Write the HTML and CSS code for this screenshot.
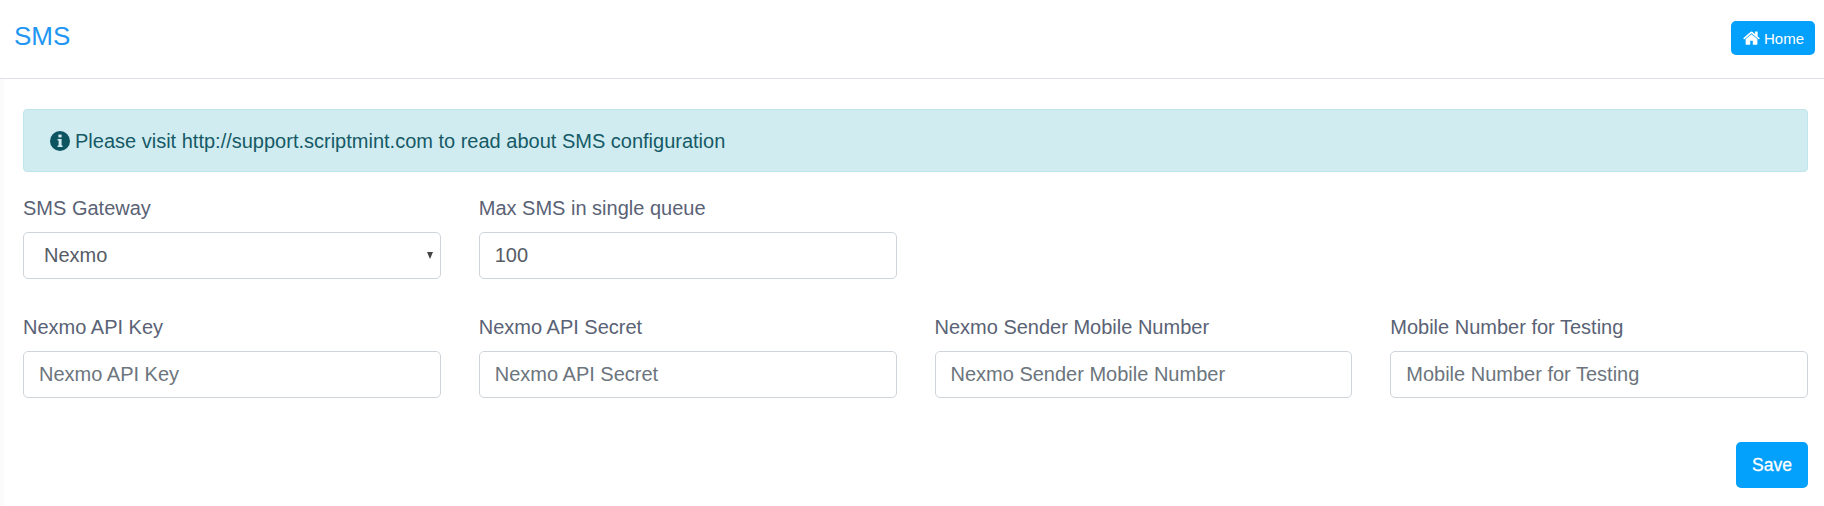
FILE: index.html
```html
<!DOCTYPE html>
<html lang="en">
<head>
    <meta charset="UTF-8">
    <title>SMS</title>
    <link rel="stylesheet" href="styles.css">
</head>
<body>

<div class="page">
    <header class="page-header">
        <h1>SMS</h1>
        <a class="btn btn-home" href="#">
            <svg class="icon-home" viewBox="0 0 1664 1408" aria-hidden="true"><path d="M1408 768v480q0 26-19 45t-45 19H960V928H704v384H320q-26 0-45-19t-19-45V768q0-1 .5-3t.5-3l575-474 575 474q1 2 1 6zm223-69l-62 74q-8 9-21 11h-3q-13 0-21-7L832 200 140 777q-12 8-24 7-13-2-21-11l-62-74q-8-10-7-23.500t11-21.500L756 37q32-26 76-26t76 26l272 227V47q0-14 9-23t23-9h192q14 0 23 9t9 23v454l219 182q10 8 11 21.500t-7 23.500z"/></svg>
            Home
        </a>
    </header>

    <form class="content">
        <!-- info message -->
        <div class="alert">
            <svg class="icon-info" viewBox="0 0 20 20" aria-hidden="true">
                <circle cx="10" cy="10" r="10"/>
                <rect class="cut" x="8.4" y="3.600" width="3.200" height="2.800"/>
                <path class="cut" d="M7.600 8h4v6.400h1V16H7.600v-1.600h1V9.600h-1z"/>
            </svg>
            Please visit http://support.scriptmint.com to read about SMS configuration
        </div>

        <div class="form-grid">
            <div class="field">
                <label for="gateway">SMS Gateway</label>
                <div class="select-wrap">
                    <select id="gateway" class="control">
                        <option>Nexmo</option>
                    </select>
                </div>
            </div>
            <div class="field">
                <label for="max-sms">Max SMS in single queue</label>
                <input id="max-sms" class="control" type="text" value="100">
            </div>
            <div class="field field-first">
                <label for="api-key">Nexmo API Key</label>
                <input id="api-key" class="control" type="text" placeholder="Nexmo API Key">
            </div>
            <div class="field">
                <label for="api-secret">Nexmo API Secret</label>
                <input id="api-secret" class="control" type="text" placeholder="Nexmo API Secret">
            </div>
            <div class="field">
                <label for="sender">Nexmo Sender Mobile Number</label>
                <input id="sender" class="control" type="text" placeholder="Nexmo Sender Mobile Number">
            </div>
            <div class="field">
                <label for="test-number">Mobile Number for Testing</label>
                <input id="test-number" class="control" type="text" placeholder="Mobile Number for Testing">
            </div>
        </div>

        <div class="form-actions">
            <button type="submit" class="btn btn-save">Save</button>
        </div>
    </form>
</div>

</body>
</html>
```

FILE: styles.css
```css
* {
    box-sizing: border-box;
}
body {
    margin: 0;
    background-color: #fbfbfc;
    font-family: 'Liberation Sans', Arial, sans-serif;
    color: #5a6275;
}
.page {
    margin-left: 4px;
    height: 506px;
    background-color: #fff;
}
.page-header {
    display: flex;
    justify-content: space-between;
    align-items: flex-start;
    height: 79px;
    margin-left: -4px;
    padding: 21px 9px 0 14px;
    background-color: #fff;
    border-bottom: 1px solid #dee2e6;
}
.page-header h1 {
    margin: 0;
    font-size: 26px;
    font-weight: normal;
    line-height: 30px;
    color: #2196f3;
}
.btn {
    border: none;
    border-radius: 5px;
    background-color: #03a0fc;
    color: #fff;
    font-family: inherit;
    text-decoration: none;
}
.btn-home {
    display: flex;
    align-items: center;
    gap: 4px;
    width: 84px;
    height: 34px;
    padding-left: 12px;
    font-size: 15px;
}
.icon-home {
    width: 17px;
    height: 15px;
    fill: #fff;
}
.content {
    padding: 30px 16px 0 19px;
}
.alert {
    display: flex;
    align-items: center;
    gap: 5px;
    height: 63px;
    padding: 1px 0 0 26px;
    border: 1px solid #bee5eb;
    border-radius: 4px;
    background-color: #d1ecf1;
    color: #155a66;
    font-size: 20px;
}
.icon-info {
    width: 20px;
    height: 20px;
    fill: #0c5460;
}
.icon-info .cut {
    fill: #d1ecf1;
}
.form-grid {
    display: grid;
    grid-template-columns: repeat(4, 1fr);
    gap: 34px 38px;
    margin-top: 22px;
}
.field {
    display: flex;
    flex-direction: column;
}
.field-first {
    grid-column: 1;
}
.field label {
    height: 38px;
    font-size: 20px;
    line-height: 28px;
}
.control {
    width: 100%;
    height: 47px;
    padding: 0 15px 1px;
    border: 1px solid #ced4da;
    border-radius: 5px;
    background-color: #fff;
    font-family: inherit;
    font-size: 20px;
    color: #565c66;
}
.control::placeholder {
    color: #6c757d;
    opacity: 1;
}
.select-wrap {
    position: relative;
}
.select-wrap select {
    display: block;
    padding-left: 20px;
    appearance: none;
}
.select-wrap::after {
    content: "";
    position: absolute;
    top: 20px;
    right: 8px;
    border-top: 7px solid #444;
    border-left: 3.500px solid transparent;
    border-right: 3.500px solid transparent;
}
.form-actions {
    display: flex;
    justify-content: flex-end;
    margin-top: 44px;
}
.btn-save {
    width: 72px;
    height: 46px;
    font-size: 17.500px;
    -webkit-text-stroke: 0.3px #fff;
}
```
